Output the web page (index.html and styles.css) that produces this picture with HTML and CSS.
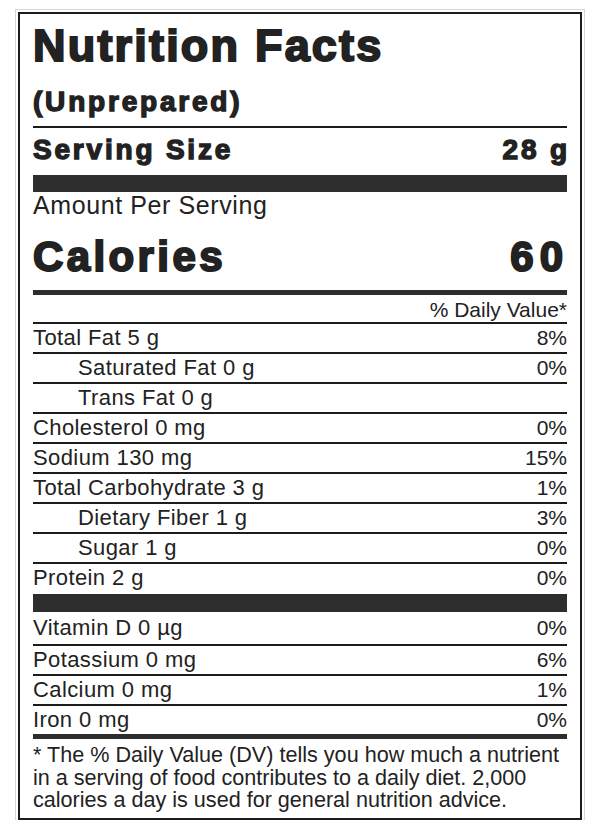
FILE: index.html
```html
<!DOCTYPE html>
<html>
<head>
  <meta charset="UTF-8">
  <title>Nutrition Facts</title>
  <link rel="stylesheet" href="styles.css">
</head>
<body>
  <div class="label">
    <div class="header">
      <h1 class="title">Nutrition Facts</h1>
      <div class="subtitle">(Unprepared)</div>
    </div>
    <div class="serving">
      <span>Serving Size</span>
      <span class="val">28 g</span>
    </div>
    <div class="amount">Amount Per Serving</div>
    <div class="calories">
      <span>Calories</span>
      <span class="val">60</span>
    </div>
    <div class="dv-head">% Daily Value*</div>
    <div class="row"><span class="name">Total Fat 5 g</span><span>8%</span></div>
    <div class="row sub"><span class="name">Saturated Fat 0 g</span><span>0%</span></div>
    <div class="row sub"><span class="name">Trans Fat 0 g</span><span></span></div>
    <div class="row"><span class="name">Cholesterol 0 mg</span><span>0%</span></div>
    <div class="row"><span class="name">Sodium 130 mg</span><span>15%</span></div>
    <div class="row"><span class="name">Total Carbohydrate 3 g</span><span>1%</span></div>
    <div class="row sub"><span class="name">Dietary Fiber 1 g</span><span>3%</span></div>
    <div class="row sub"><span class="name">Sugar 1 g</span><span>0%</span></div>
    <div class="row"><span class="name">Protein 2 g</span><span>0%</span></div>
    <div class="bar"></div>
    <div class="vitamins">
      <div class="row"><span class="name">Vitamin D 0 µg</span><span>0%</span></div>
      <div class="row"><span class="name">Potassium 0 mg</span><span>6%</span></div>
      <div class="row"><span class="name">Calcium 0 mg</span><span>1%</span></div>
      <div class="row"><span class="name">Iron 0 mg</span><span>0%</span></div>
    </div>
    <p class="footnote">* The % Daily Value (DV) tells you how much a nutrient in a serving of food contributes to a daily diet. 2,000 calories a day is used for general nutrition advice.</p>
  </div>
</body>
</html>
```

FILE: styles.css
```css
* {
  box-sizing: border-box;
  margin: 0;
  padding: 0;
}

body {
  padding: 12px 0 0 18px;
  background: #fff;
  color: #222;
  font-family: "Liberation Sans", Arial, sans-serif;
}

.label {
  width: 564px;
  height: 808px;
  padding: 0 13px;
  border: 2px solid #1c1c1c;
  outline: 1px solid #d6d6d6;
  outline-offset: 2px;
}

/* heavy headings: stand-in for Arial Black */
.title,
.subtitle,
.serving,
.calories {
  font-weight: 700;
  -webkit-text-stroke: 1.4px #222;
}

.header {
  padding-top: 6px;
  padding-bottom: 6px;
  border-bottom: 2px solid #1c1c1c;
}

.title {
  font-size: 45px;
  line-height: 52px;
  letter-spacing: 2.2px;
  -webkit-text-stroke: 2px #222;
}

.subtitle {
  margin-top: 12px;
  font-size: 28px;
  line-height: 36px;
  letter-spacing: 2.8px;
}

.serving {
  display: flex;
  justify-content: space-between;
  padding: 5px 0 8px;
  font-size: 28px;
  line-height: 34px;
  letter-spacing: 2.8px;
  border-bottom: 17px solid #2d2d2d;
}

.val {
  margin-right: -2.8px;
}

.amount {
  font-size: 25px;
  line-height: 26px;
  letter-spacing: 0.6px;
}

.calories {
  display: flex;
  justify-content: space-between;
  padding: 14px 0 8px;
  font-size: 42px;
  line-height: 50px;
  letter-spacing: 3.4px;
  border-bottom: 5px solid #2d2d2d;
  -webkit-text-stroke: 2px #222;
}

.calories .val {
  margin-right: -2px;
  letter-spacing: 6px;
}

.dv-head {
  padding-top: 3px;
  font-size: 21px;
  line-height: 24px;
  text-align: right;
}

.row {
  display: flex;
  justify-content: space-between;
  border-top: 2px solid #1c1c1c;
  font-size: 21px;
  line-height: 28px;
}

.row .name {
  font-size: 22px;
  letter-spacing: 0.4px;
}

.row.sub {
  padding-left: 45px;
}

.bar {
  height: 18px;
  margin-top: 2px;
  background: #2d2d2d;
}

.vitamins .row:first-child {
  border-top: none;
  line-height: 32px;
}

.vitamins {
  border-bottom: 5px solid #2d2d2d;
}

.footnote {
  padding-top: 5px;
  font-size: 21.6px;
  line-height: 22.5px;
}
```
